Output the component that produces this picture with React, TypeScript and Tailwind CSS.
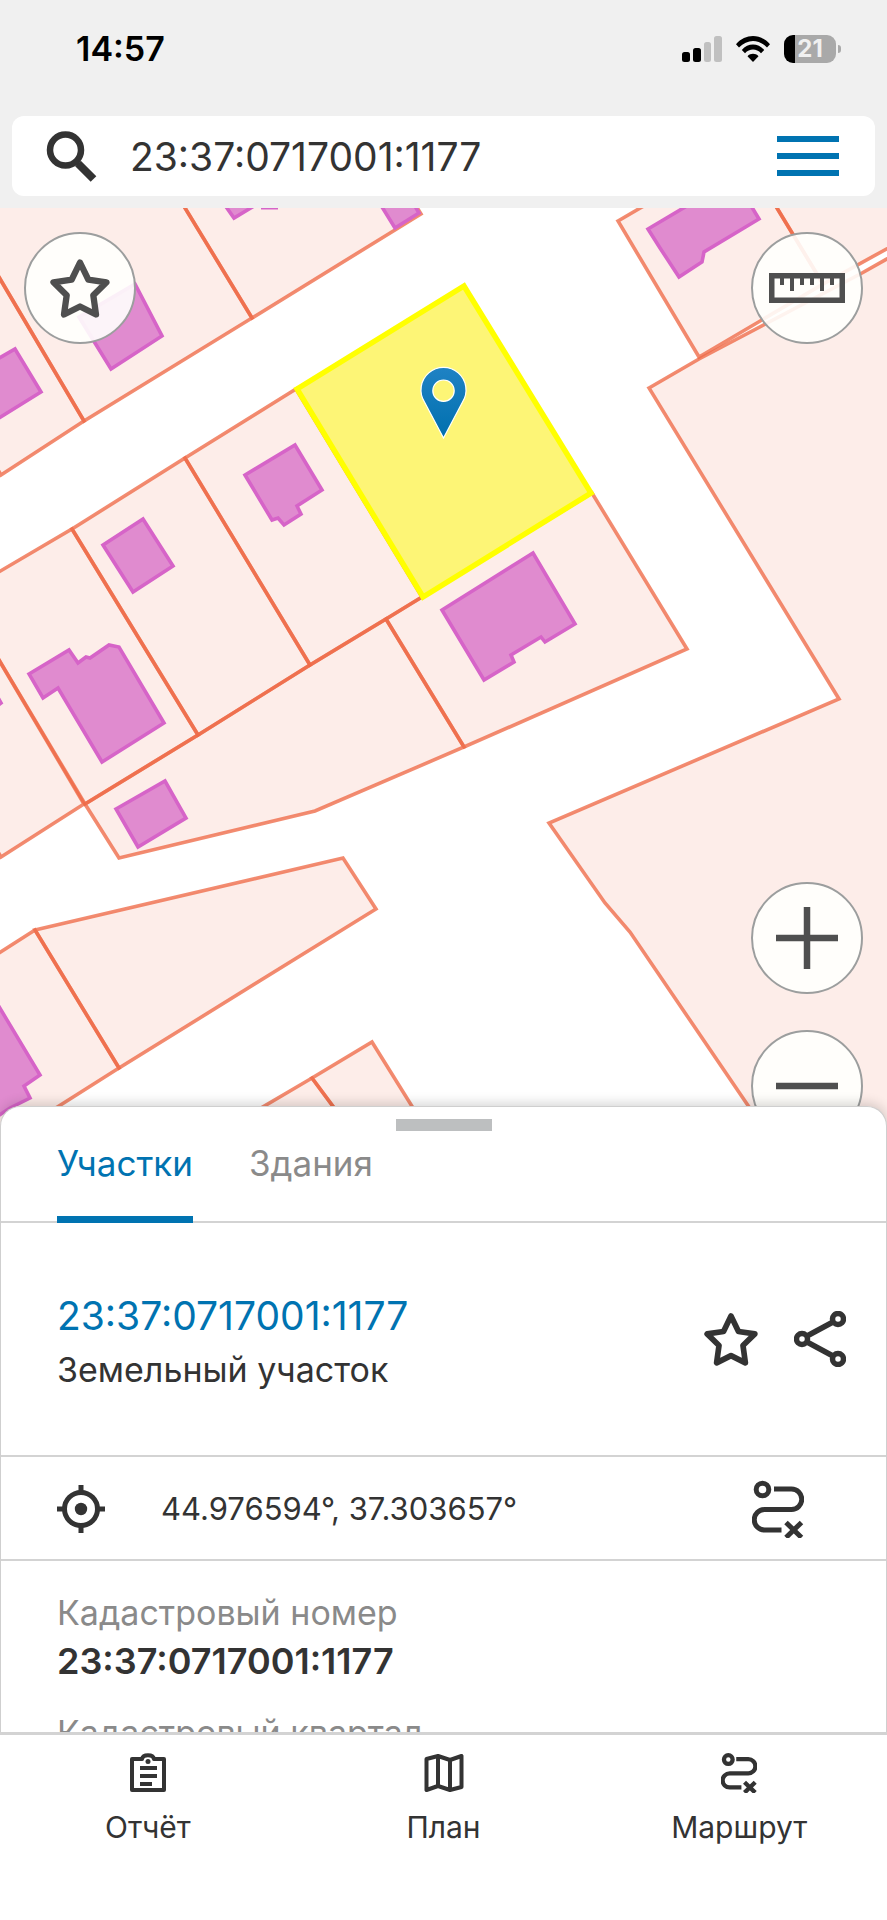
import React from "react";

const parcels = [
  "-20,245 84,421 1,475 -20,440",
  "-20,245 -20,150 150,150 168,180 252,318 84,421",
  "168,180 400,180 421,214 252,318",
  "-20,628 84,804 1,857 -20,822",
  "-20,583 72,529 198,735 85,804 -20,628",
  "72,529 185,458 310,665 198,735",
  "185,458 296,389 422,597 386,619 310,665",
  "422,597 592,493 687,649 464,747 386,619",
  "85,804 198,735 310,665 386,619 464,747 315,811 119,858",
  "618,221 642,207 690,180 760,180 777,208 823,284 699,357",
  "760,180 910,180 910,236 823,284",
  "649,388 699,359 862,273 910,246 910,1150 778,1150 747,1104 630,932 605,903 549,823 839,699",
  "-20,965 35,930 119,1068 -20,1156",
  "35,930 343,858 376,909 119,1068",
  "220,1132 312,1078 352,1132",
  "312,1078 372,1042 428,1132 352,1132",
];

const buildings = [
  "217,194 234,218 274,194",
  "374,194 395,228 419,213 408,194",
  "-30,375 15,349 41,392 -30,436",
  "79,317 135,284 162,336 111,369",
  "245,475 295,445 322,490 297,506 301,514 284,525 278,518 272,520",
  "103,545 143,519 173,566 133,592",
  "29,674 69,650 78,663 86,657 90,658 109,645 119,647 164,723 102,762 58,688 43,698",
  "116,809 165,781 186,818 138,847",
  "-12,680 1,703 -12,712",
  "442,610 533,553 575,624 545,642 541,637 511,655 514,662 484,680",
  "648,229 707,194 744,194 759,219 704,252 702,262 679,277 660,248",
  "-20,975 40,1075 24,1086 30,1098 10,1108 -20,1128",
];

type IconProps = { className?: string };

function StarIcon({ className }: IconProps) {
  return (
    <svg viewBox="0 0 60 60" className={className} fill="none" stroke="currentColor" strokeWidth="6.300" strokeLinejoin="round" aria-hidden="true">
      <path d="M30 4.500 38.300 21.700 56.500 24.300 43.300 37.200 46 56.500 30 48.500 14 56.500 16.700 37.200 3.500 24.300 21.700 21.700Z" />
    </svg>
  );
}

function RouteIcon({ className, strokeWidth }: IconProps & { strokeWidth: string }) {
  return (
    <svg viewBox="0 0 52 58" className={className} fill="none" stroke="currentColor" strokeWidth={strokeWidth} aria-hidden="true">
      <circle cx="10.500" cy="9.500" r="6.300" />
      <path d="M22 9h17.500a10 10 0 0 1 0 20.500h-27a10 10 0 0 0 0 20.500H29.500" />
      <path d="m34 42.500 15.500 15M49.500 42.500 34 57.500" />
    </svg>
  );
}

function SignalIcon({ className }: IconProps) {
  return (
    <svg viewBox="0 0 40 26" className={className} aria-hidden="true">
      <rect x="0" y="16" width="8" height="10" rx="2.500" />
      <rect x="11" y="12" width="8" height="14" rx="2.500" />
      <rect x="22" y="6" width="7" height="20" rx="2.500" fill="#c0c0c0" />
      <rect x="32" y="0" width="8" height="26" rx="2.500" fill="#c0c0c0" />
    </svg>
  );
}

function WifiIcon({ className }: IconProps) {
  return (
    <svg viewBox="0 0 34 26" className={className} aria-hidden="true">
      <path d="M0 8.200C9.500-2.700 24.500-2.700 34 8.200L31 11.500C22.700 2.800 11.300 2.800 3 11.500Z" />
      <path d="M5.800 14C12 6.800 22 6.800 28.200 14L25 17.200C20.500 12.300 13.500 12.300 9 17.200Z" />
      <path d="M11.500 20.200C14.500 17 19.500 17 22.500 20.200L17 26Z" />
    </svg>
  );
}

function MapCanvas() {
  return (
    <svg viewBox="0 208 887 918" preserveAspectRatio="xMidYMin slice" className="h-full w-full" role="img" aria-label="Карта">
      <defs>
        <linearGradient id="pin" x1="0" y1="0" x2="0" y2="1">
          <stop offset="0" stopColor="#1f82c4" />
          <stop offset="1" stopColor="#0070ae" />
        </linearGradient>
      </defs>
      <g fill="#f26a48" fillOpacity="0.120" stroke="#ee6a48" strokeOpacity="0.780" strokeWidth="3.600">
        {parcels.map((points) => (
          <polygon key={points} points={points} />
        ))}
      </g>
      <g fill="#e08bcf" stroke="#d664c8" strokeWidth="3.600">
        {buildings.map((points) => (
          <polygon key={points} points={points} />
        ))}
      </g>
      <path d="M261 208h17" stroke="#d664c8" strokeWidth="3" />
      <polygon points="297,389 464,286 591,493 423,597" fill="#fdf576" stroke="#ffff00" strokeWidth="5.500" />
      <path
        d="M443.500 438 424.500 402A22.500 22.500 0 1 1 462.500 402ZM443.500 380a10.700 10.700 0 1 0 0 21.400 10.700 10.700 0 0 0 0-21.400Z"
        fill="url(#pin)"
        fillRule="evenodd"
        stroke="#ffffff"
        strokeWidth="1.200"
      />
    </svg>
  );
}

function RoundButton({ label, children }: { label: string; children: React.ReactNode }) {
  return (
    <button
      type="button"
      aria-label={label}
      className="flex size-28 items-center justify-center rounded-full border-2 border-[#9c9e9e] bg-[#fffffd]/90 text-[#4f4f4f]"
    >
      {children}
    </button>
  );
}

function NavItem({ label, children }: { label: string; children: React.ReactNode }) {
  return (
    <button type="button" className="flex flex-1 flex-col items-center gap-3.5">
      {children}
      <span className="text-[30px] leading-10">{label}</span>
    </button>
  );
}

export default function App() {
  return (
    <div className="flex h-screen flex-col overflow-hidden bg-white font-['Inter','Liberation_Sans',sans-serif] text-[#333333]">
      <header className="bg-[#f0f0f0] px-3 pb-3">
        <div className="flex h-[116px] items-center justify-between pr-[34px] pb-[18px] pl-16 text-black">
          <span className="text-[34px] leading-10 font-semibold">14:57</span>
          <div className="flex items-center gap-3.5">
            <SignalIcon className="h-[26px] w-10" />
            <WifiIcon className="h-[26px] w-[34px]" />
            <div className="flex items-center gap-0.5">
              <div className="flex h-7 w-[52px] items-center justify-center rounded-[9px] bg-linear-to-r from-black from-22% to-[#a9a9a9] to-22% text-2xl font-bold text-[#f0f0f0]">
                21
              </div>
              <span className="h-2 w-[3px] rounded-r-full bg-[#a9a9a9]" />
            </div>
          </div>
        </div>
        <div className="flex h-20 items-center rounded-xl bg-white pr-9 pl-[34px]">
          <svg viewBox="0 0 52 52" className="size-[52px] shrink-0" fill="none" stroke="currentColor" aria-hidden="true">
            <circle cx="19.500" cy="20" r="15.500" strokeWidth="6.500" />
            <path d="m29 30 4 5" strokeWidth="4" />
            <path d="m32 33.500 15.500 15.500" strokeWidth="8" />
          </svg>
          <input
            type="text"
            aria-label="Поиск"
            defaultValue="23:37:0717001:1177"
            className="ml-8 min-w-0 flex-1 bg-transparent pt-0.5 text-[39px] leading-12 outline-none"
          />
          <button type="button" aria-label="Меню" className="flex w-[62px] flex-col gap-[11px]">
            <span className="h-1.5 bg-[#0073b1]" />
            <span className="h-1.5 bg-[#0073b1]" />
            <span className="h-1.5 bg-[#0073b1]" />
          </button>
        </div>
      </header>

      <main className="relative min-h-0 flex-1 overflow-hidden">
        <MapCanvas />
        <div className="absolute inset-x-6 top-6 flex justify-between">
          <RoundButton label="Избранное">
            <StarIcon className="size-[60px]" />
          </RoundButton>
          <RoundButton label="Линейка">
            <svg viewBox="0 0 76 30" className="h-[30px] w-[76px]" fill="none" stroke="currentColor" aria-hidden="true">
              <rect x="2.750" y="2.750" width="70.500" height="24.500" strokeWidth="5.500" />
              <path d="M13 5v7M23 5v13M33 5v7M43 5v7M53 5v13M63 5v7" strokeWidth="4" />
            </svg>
          </RoundButton>
        </div>
        <div className="absolute right-6 -bottom-4 flex flex-col gap-9">
          <RoundButton label="Приблизить">
            <svg viewBox="0 0 62 62" className="size-[62px]" stroke="currentColor" strokeWidth="6.500" aria-hidden="true">
              <path d="M0 31h62M31 0v62" />
            </svg>
          </RoundButton>
          <RoundButton label="Отдалить">
            <svg viewBox="0 0 62 62" className="size-[62px]" stroke="currentColor" strokeWidth="6.500" aria-hidden="true">
              <path d="M0 31h62" />
            </svg>
          </RoundButton>
        </div>
      </main>

      <section className="relative -mt-5 rounded-t-[20px] border border-b-0 border-[#cfcfcf] bg-white shadow-[0_-3px_12px_rgba(0,0,0,0.16)]">
        <div className="mx-auto mt-3 h-3 w-24 bg-[#bdbfc0]" />
        <div className="flex h-[92px] gap-14 border-b-2 border-[#d3d3d3] px-14 text-[35px] leading-10">
          <button type="button" className="-mb-0.5 flex border-b-[7px] border-[#0073b1] pt-3 text-[#0073b1]">
            Участки
          </button>
          <button type="button" className="flex pt-3 text-[#8a8a8a]">
            Здания
          </button>
        </div>
        <div className="flex h-[234px] items-center justify-between border-b-2 border-[#d3d3d3] pr-10 pl-14">
          <div className="pt-2">
            <a href="#parcel" className="block text-[39px] leading-[54px] text-[#0073b1]">
              23:37:0717001:1177
            </a>
            <p className="text-[34px] leading-[54px]">Земельный участок</p>
          </div>
          <div className="flex items-center gap-9">
            <button type="button" aria-label="В избранное">
              <StarIcon className="size-[54px]" />
            </button>
            <button type="button" aria-label="Поделиться">
              <svg viewBox="0 0 52 56" className="h-14 w-[52px]" fill="none" stroke="currentColor" strokeWidth="5.500" aria-hidden="true">
                <circle cx="8" cy="28" r="5.500" />
                <circle cx="44" cy="8" r="5.500" />
                <circle cx="44" cy="48" r="5.500" />
                <path d="m13 25 26-14M13 31l26 14" />
              </svg>
            </button>
          </div>
        </div>
        <div className="flex h-[104px] items-center border-b-2 border-[#d3d3d3] pt-0.5 pr-[82px] pl-14">
          <svg viewBox="0 0 48 48" className="size-12" fill="none" stroke="currentColor" strokeWidth="5" aria-hidden="true">
            <circle cx="24" cy="24" r="16.500" />
            <circle cx="24" cy="24" r="6.200" fill="currentColor" stroke="none" />
            <path d="M24 0v8M24 40v8M0 24h8M40 24h8" />
          </svg>
          <span className="ml-14 flex-1 text-[31px] leading-10">44.976594°, 37.303657°</span>
          <button type="button" aria-label="Маршрут до участка">
            <RouteIcon className="h-[58px] w-[52px]" strokeWidth="5" />
          </button>
        </div>
        <dl className="h-[171px] overflow-hidden px-14 pt-7 text-[34px] leading-12">
          <dt className="text-[#8a8a8a]">Кадастровый номер</dt>
          <dd className="mb-6 text-[36px] font-semibold">23:37:0717001:1177</dd>
          <dt className="text-[#8a8a8a]">Кадастровый квартал</dt>
        </dl>
      </section>

      <nav className="relative flex h-[188px] items-start border-t-3 border-[#d3d3d3] bg-white pt-[18px]">
        <NavItem label="Отчёт">
          <svg viewBox="0 0 38 40" className="h-10 w-[38px]" fill="none" stroke="currentColor" strokeWidth="4" strokeLinejoin="round" aria-hidden="true">
            <path d="M3 6h10c1-5 11-5 12 0h10v31H3Z" />
            <path d="M11 15h17M11 23h17M11 31h12" />
            <circle cx="19" cy="8.500" r="2.500" fill="currentColor" stroke="none" />
          </svg>
        </NavItem>
        <NavItem label="План">
          <svg viewBox="0 0 40 40" className="size-10" fill="none" stroke="currentColor" strokeWidth="4" strokeLinejoin="round" aria-hidden="true">
            <path d="M2.500 6 14 3l12 4 11.500-4v31L26 37l-12-4-11.500 4Z" />
            <path d="M14 3v30M26 7v30" />
          </svg>
        </NavItem>
        <NavItem label="Маршрут">
          <RouteIcon className="h-10 w-9" strokeWidth="6.200" />
        </NavItem>
      </nav>
    </div>
  );
}
